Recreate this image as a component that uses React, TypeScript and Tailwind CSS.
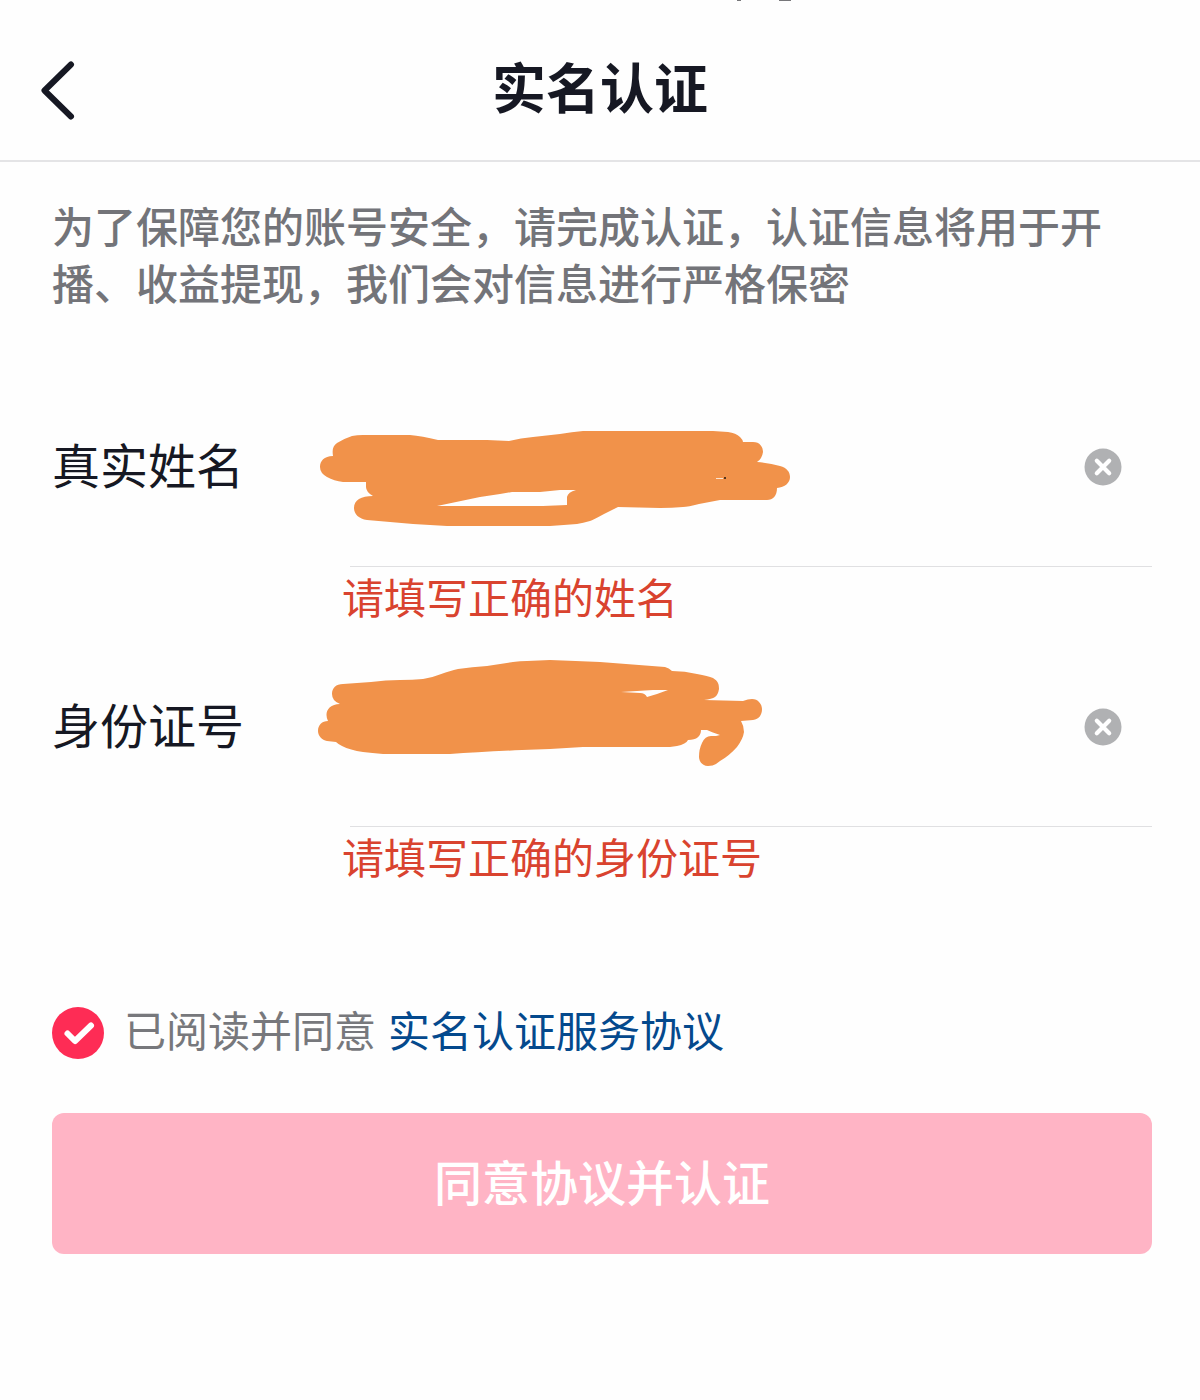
import React, { useState } from "react";

interface FieldProps {
  id: string;
  label: string;
  error: string;
  children: React.ReactNode;
}

const Field = ({ id, label, error, children }: FieldProps) => {
  const [value, setValue] = useState("");
  const [covered, setCovered] = useState(true);

  const handleClear = () => {
    setValue("");
    setCovered(false);
  };

  return (
    <div className="flex">
      <label
        htmlFor={id}
        className="w-[298px] h-[200px] pb-2 shrink-0 flex items-center text-[48px] text-[#161823]"
      >
        {label}
      </label>
      <div className="flex-1 min-w-0">
        <div className="relative h-[200px] flex items-center pr-[30px] border-b border-[#e0e0e2]">
          <input
            id={id}
            type="text"
            value={value}
            onChange={(e) => setValue(e.target.value)}
            aria-describedby={`${id}-error`}
            className="flex-1 min-w-0 h-full text-[48px] text-[#161823] bg-transparent outline-none"
          />
          <button type="button" aria-label="清除" onClick={handleClear}>
            <svg viewBox="0 0 38 38" className="w-[38px] h-[38px]">
              <circle cx="19" cy="19" r="18.5" fill="#b0b1b3" />
              <path
                d="M12.8 12.8L25.2 25.2M25.2 12.8L12.8 25.2"
                stroke="#fff"
                strokeWidth="4.2"
                strokeLinecap="round"
              />
            </svg>
          </button>
          {/* Marker strokes hiding the entered value */}
          {covered && children}
        </div>
        <p
          id={`${id}-error`}
          className="-ml-2 h-[60px] leading-[57px] text-[42px] text-[#d9432f]"
        >
          {error}
        </p>
      </div>
    </div>
  );
};

const NameMarker = () => (
  <svg
    viewBox="310 367 490 200"
    className="absolute top-0 -left-10 w-[490px] h-[200px] pointer-events-none"
    aria-hidden="true"
  >
    <path
      fill="#f1924a"
      fillRule="evenodd"
      d="M320 467C320 461 324 456 333 456C332 449 333 446 337 443Q343 439 352 436Q357 435 363 435L410 435Q422 436 438 440L487 440L509 441Q521 438 533 437L560 434Q572 432 583 431L713 431L728 432Q736 433 740 437Q743 440 743 442L753 442C760 442 763 447 763 452Q762 459 757 462Q770 463 780 466C787 468 790 472 790 477C790 483 785 487 777 488C777 496 773 500 767 500L720 500L699 504Q688 507 683 507Q672 508 660 508L618 507L604 514Q593 520 590 521Q583 523 577 524Q564 525 550 526L447 526Q430 525 413 524L367 520C359 519 354 514 354 508C354 500 361 496 373 496Q366 492 366 487L366 482L343 482Q334 481 327 477Q320 473 320 467ZM437 506L543 506L567 505L567 497Q568 492 576 490L560 490L540 492L512 492L500 494L480 497Z"
    />
    <path d="M716 478h7v1h-7z" fill="#fce5d2" />
    <path d="M724 477h2v2h-2z" fill="#55351c" />
  </svg>
);

const NumberMarker = () => (
  <svg
    viewBox="310 627 490 200"
    className="absolute top-0 -left-10 w-[490px] h-[200px] pointer-events-none"
    aria-hidden="true"
  >
    <path
      fill="#f1924a"
      fillRule="evenodd"
      d="M318 731C318 725 322 721 328 721C324 713 328 704 340 704Q332 701 332 694C332 688 336 684 343 684L371 682Q386 680 400 680Q413 680 423 679C436 677 447 671 458 669Q472 667 487 666L513 662Q520 661 527 661L550 660Q576 661 600 662L665 667Q669 668 672 671Q685 671 697 674Q708 676 713 678C718 681 719 684 719 689Q718 695 715 697Q712 699 704 700L743 701Q748 699 752 699C758 699 762 704 762 709C762 715 759 719 753 720L741 721Q744 726 744 732Q743 739 737 747Q729 756 720 761L716 764Q713 766 708 766C702 766 699 761 699 757Q699 749 702 743Q705 736 711 736L716 736L720 735Q711 732 707 730L701 730C701 736 697 740 688 740Q686 744 677 746L670 747L583 747L550 749L522 750Q480 752 450 754L383 754Q372 753 363 752Q350 750 342 746Q338 744 336 742L327 741C322 740 318 736 318 731ZM621 692L653 690L668 690L657 694L647 697Q645 693 640 693Z"
    />
  </svg>
);

const App = () => {
  const [agreed, setAgreed] = useState(true);

  return (
    <div
      lang="zh-CN"
      className="relative min-h-screen overflow-hidden bg-[#fefefe] font-['Noto_Sans_CJK_SC',sans-serif]"
    >
      {/* Tail of the status bar */}
      <span className="absolute top-0 left-[737px] w-1 h-px bg-[#77777a]" />
      <span className="absolute top-0 left-[779px] w-3 h-px bg-[#77777a]" />

      <header className="h-[162px] pb-4 px-10 flex items-center border-b-2 border-[#e4e4e6]">
        <button type="button" aria-label="返回" className="w-10 pt-9">
          <svg viewBox="0 0 40 60" className="w-10 h-[60px]" fill="none">
            <path
              d="M31 4.5L4.5 30.5L31 56.5"
              stroke="#161823"
              strokeWidth="6"
              strokeLinecap="round"
              strokeLinejoin="round"
            />
          </svg>
        </button>
        <h1 className="flex-1 pt-7 pr-10 text-center text-[54px] leading-[80px] font-bold text-[#161823]">
          实名认证
        </h1>
      </header>

      <main className="pl-[52px] pr-12 pt-[34px]">
        <p className="text-[42px] leading-[57px] text-[#737479] font-medium">
          为了保障您的账号安全，请完成认证，认证信息将用于开播、收益提现，我们会对信息进行严格保密
        </p>

        <form className="pt-[57px]" onSubmit={(e) => e.preventDefault()}>
          <Field id="name" label="真实姓名" error="请填写正确的姓名">
            <NameMarker />
          </Field>
          <Field id="id-number" label="身份证号" error="请填写正确的身份证号">
            <NumberMarker />
          </Field>

          <div className="pt-[116px] flex items-center text-[42px] leading-[52px]">
            <span className="relative w-[52px] h-[52px] mr-5 shrink-0">
              <input
                id="agree"
                type="checkbox"
                checked={agreed}
                onChange={(e) => setAgreed(e.target.checked)}
                className="block w-[52px] h-[52px] appearance-none rounded-full border-2 border-[#c8c8cb] checked:border-0 checked:bg-[#fe2c55]"
              />
              {agreed && (
                <svg
                  viewBox="0 0 52 52"
                  className="absolute inset-0 pointer-events-none"
                  fill="none"
                >
                  <path
                    d="M15.5 26.5L23 34L39 18.5"
                    stroke="#fff"
                    strokeWidth="6"
                    strokeLinecap="round"
                    strokeLinejoin="round"
                  />
                </svg>
              )}
            </span>
            <label htmlFor="agree" className="pb-2 text-[#77787c]">
              已阅读并同意
            </label>
            <a href="#agreement" className="pb-2 ml-3 text-[#04498d]">
              实名认证服务协议
            </a>
          </div>

          <button
            type="submit"
            className="mt-[50px] w-full h-[141px] pb-2 rounded-xl bg-[#ffb4c5] text-[48px] font-medium text-white"
          >
            同意协议并认证
          </button>
        </form>
      </main>
    </div>
  );
};

export default App;
